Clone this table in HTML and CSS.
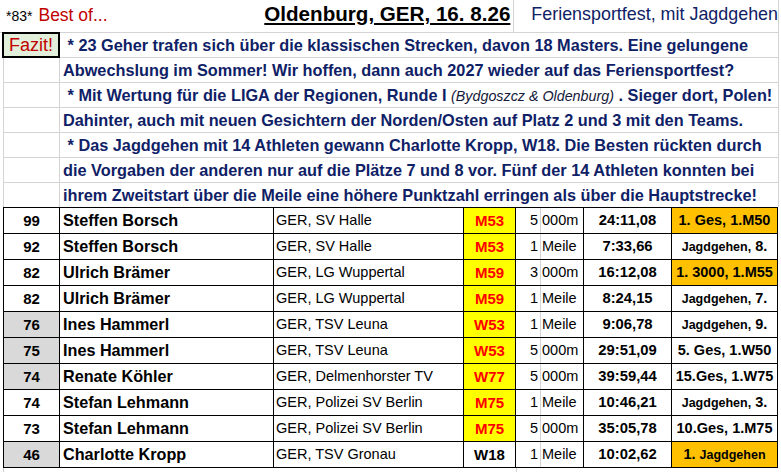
FILE: index.html
```html
<!DOCTYPE html>
<html lang="de">
<head>
<meta charset="utf-8">
<title>Best of... Oldenburg</title>
<link rel="stylesheet" href="styles.css">
</head>
<body>
<div class="sheet">
  <div class="head">
    <div class="head-left">
      <div class="bestof"><span class="nr">*83*</span><span class="red">Best of...</span></div>
      <div class="title">Oldenburg, GER, 16. 8.26</div>
    </div>
    <div class="head-right">Feriensportfest, mit Jagdgehen</div>
  </div>
  <div class="notes">
    <div class="line"><div class="a fazit">Fazit!</div><div class="b">&nbsp;* 23 Geher trafen sich über die klassischen Strecken, davon 18 Masters. Eine gelungene</div></div>
    <div class="line"><div class="a"></div><div class="b">Abwechslung im Sommer! Wir hoffen, dann auch 2027 wieder auf das Feriensportfest?</div></div>
    <div class="line"><div class="a"></div><div class="b">&nbsp;* Mit Wertung für die LIGA der Regionen, Runde I <span class="it">(Bydgoszcz &amp; Oldenburg)</span> . Sieger dort, Polen!</div></div>
    <div class="line"><div class="a"></div><div class="b">Dahinter, auch mit neuen Gesichtern der Norden/Osten auf Platz 2 und 3 mit den Teams.</div></div>
    <div class="line"><div class="a"></div><div class="b">&nbsp;* Das Jagdgehen mit 14 Athleten gewann Charlotte Kropp, W18. Die Besten rückten durch</div></div>
    <div class="line"><div class="a"></div><div class="b">die Vorgaben der anderen nur auf die Plätze 7 und 8 vor. Fünf der 14 Athleten konnten bei</div></div>
    <div class="line last"><div class="a"></div><div class="b">ihrem Zweitstart über die Meile eine höhere Punktzahl erringen als über die Hauptstrecke!</div></div>
  </div>
  <div class="results">
    <div class="row"><div class="c pts">99</div><div class="c name">Steffen Borsch</div><div class="c club">GER, SV Halle</div><div class="c ak">M53</div><div class="c num">5</div><div class="c unit">000m</div><div class="c time">24:11,08</div><div class="c place gold">1. Ges, 1.M50</div></div>
    <div class="row"><div class="c pts">92</div><div class="c name">Steffen Borsch</div><div class="c club">GER, SV Halle</div><div class="c ak">M53</div><div class="c num">1</div><div class="c unit">Meile</div><div class="c time">7:33,66</div><div class="c place"><span class="sm">Jagdgehen,</span> 8.</div></div>
    <div class="row"><div class="c pts">82</div><div class="c name">Ulrich Brämer</div><div class="c club">GER, LG Wuppertal</div><div class="c ak">M59</div><div class="c num">3</div><div class="c unit">000m</div><div class="c time">16:12,08</div><div class="c place gold">1. 3000, 1.M55</div></div>
    <div class="row"><div class="c pts">82</div><div class="c name">Ulrich Brämer</div><div class="c club">GER, LG Wuppertal</div><div class="c ak">M59</div><div class="c num">1</div><div class="c unit">Meile</div><div class="c time">8:24,15</div><div class="c place"><span class="sm">Jagdgehen,</span> 7.</div></div>
    <div class="row"><div class="c pts w">76</div><div class="c name">Ines Hammerl</div><div class="c club">GER, TSV Leuna</div><div class="c ak">W53</div><div class="c num">1</div><div class="c unit">Meile</div><div class="c time">9:06,78</div><div class="c place"><span class="sm">Jagdgehen,</span> 9.</div></div>
    <div class="row"><div class="c pts w">75</div><div class="c name">Ines Hammerl</div><div class="c club">GER, TSV Leuna</div><div class="c ak">W53</div><div class="c num">5</div><div class="c unit">000m</div><div class="c time">29:51,09</div><div class="c place">5. Ges, 1.W50</div></div>
    <div class="row"><div class="c pts w">74</div><div class="c name">Renate Köhler</div><div class="c club">GER, Delmenhorster TV</div><div class="c ak">W77</div><div class="c num">5</div><div class="c unit">000m</div><div class="c time">39:59,44</div><div class="c place">15.Ges, 1.W75</div></div>
    <div class="row"><div class="c pts">74</div><div class="c name">Stefan Lehmann</div><div class="c club">GER, Polizei SV Berlin</div><div class="c ak">M75</div><div class="c num">1</div><div class="c unit">Meile</div><div class="c time">10:46,21</div><div class="c place"><span class="sm">Jagdgehen,</span> 3.</div></div>
    <div class="row"><div class="c pts">73</div><div class="c name">Stefan Lehmann</div><div class="c club">GER, Polizei SV Berlin</div><div class="c ak">M75</div><div class="c num">5</div><div class="c unit">000m</div><div class="c time">35:05,78</div><div class="c place">10.Ges, 1.M75</div></div>
    <div class="row"><div class="c pts w">46</div><div class="c name">Charlotte Kropp</div><div class="c club">GER, TSV Gronau</div><div class="c ak plain">W18</div><div class="c num">1</div><div class="c unit">Meile</div><div class="c time">10:02,62</div><div class="c place gold">1. <span class="sm">Jagdgehen</span></div></div>
  </div>
  <div class="tail"><div class="ta"></div></div>
</div>
</body>
</html>
```

FILE: styles.css
```css
html, body {
  margin: 0;
  padding: 0;
  background: #fff;
}
body {
  font-family: "Liberation Sans", Arial, sans-serif;
  color: #000;
}
.sheet {
  width: 781px;
}
.head {
  display: flex;
  height: 33px;
  border-bottom: 1px solid #d4d4d4;
  box-sizing: border-box;
  width: 779px;
}
.head-left {
  width: 516px;
  box-sizing: border-box;
  border-right: 1px solid #d4d4d4;
  display: flex;
  justify-content: space-between;
  align-items: flex-end;
  padding: 0 3px 6px 6px;
}
.bestof {
  white-space: nowrap;
}
.nr {
  font-size: 14px;
  margin-right: 6px;
}
.red {
  color: #c00000;
  font-size: 17.5px;
}
.title {
  font-weight: bold;
  font-size: 20.6px;
  text-decoration: underline;
  text-decoration-thickness: 2px;
  text-underline-offset: 2px;
  white-space: nowrap;
}
.head-right {
  flex: 1;
  border-right: 1px solid #d4d4d4;
  color: #0f2166;
  font-size: 17.9px;
  padding: 0 0 7px 17px;
  display: flex;
  align-items: flex-end;
  white-space: nowrap;
}
.notes {
  margin-left: 3px;
  width: 776px;
}
.line {
  display: flex;
  height: 25px;
  border-bottom: 1px solid #d4d4d4;
  box-sizing: border-box;
}
.line.last {
  border-bottom: 0;
  height: 24px;
}
.line .a {
  width: 57px;
  box-sizing: border-box;
  border-left: 1px solid #d4d4d4;
  border-right: 1px solid #d4d4d4;
}
.line .b {
  flex: 1;
  border-right: 1px solid #d4d4d4;
  color: #0f2166;
  font-weight: bold;
  font-size: 16.3px;
  line-height: 24px;
  padding-left: 3px;
  white-space: nowrap;
  overflow: hidden;
}
.line .a.fazit {
  background: #e2efda;
  color: #c00000;
  font-size: 18px;
  line-height: 23px;
  text-align: center;
  border: 2px solid #000;
  margin: -1px 0 -1px -1px;
  width: 58px;
  height: 26px;
  position: relative;
}
.it {
  font-style: italic;
  font-weight: normal;
  font-size: 14.3px;
  color: #14183a;
}
.results {
  margin-left: 3px;
  width: 775px;
  border-top: 1px solid #000;
}
.row {
  display: grid;
  grid-template-columns: 56px 214px 190px 52px 25px 43px 88px 107px;
  height: 26px;
  border-bottom: 1px solid #000;
  box-sizing: border-box;
}
.c {
  border-left: 1px solid #000;
  box-sizing: border-box;
  line-height: 25px;
  white-space: nowrap;
  overflow: hidden;
}
.pts {
  font-weight: bold;
  font-size: 15px;
  text-align: center;
}
.pts.w {
  background: #d9d9d9;
}
.name {
  font-weight: bold;
  font-size: 16.2px;
  padding-left: 3px;
}
.club {
  font-size: 14.5px;
  padding-left: 2px;
}
.ak {
  background: #ffff00;
  color: #ff0000;
  font-weight: bold;
  font-size: 15px;
  text-align: center;
}
.ak.plain {
  background: #fff;
  color: #000;
}
.num {
  font-size: 14.5px;
  text-align: right;
  padding-right: 2px;
}
.unit {
  font-size: 14.5px;
  border-left-color: #d4d4d4;
  padding-left: 1px;
}
.time {
  font-weight: bold;
  font-size: 14.8px;
  text-align: center;
}
.place {
  font-weight: bold;
  font-size: 14.5px;
  text-align: center;
  border-right: 1px solid #000;
}
.place.gold {
  background: #ffc000;
}
.sm {
  font-size: 12.5px;
}
.tail {
  display: flex;
  height: 5px;
  margin-left: 3px;
}
.ta {
  width: 512px;
  border-left: 1px solid #d4d4d4;
  border-right: 1px solid #d4d4d4;
}
```
